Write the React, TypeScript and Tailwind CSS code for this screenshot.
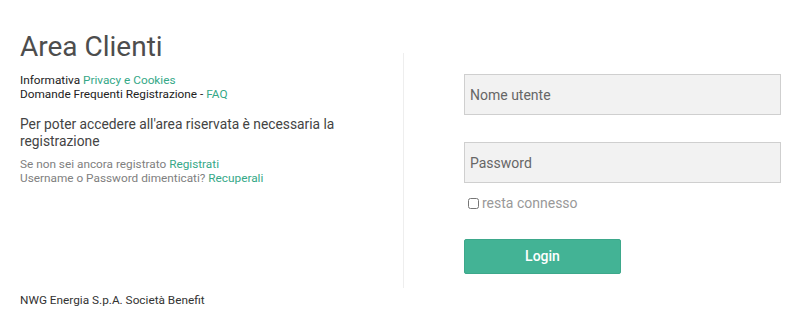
import React from 'react';

const App: React.FC = () => {
  return (
    <div className="w-[800px] h-[317px] bg-white text-[#333] font-['Roboto',sans-serif] flex flex-col">
      <div className="flex">
        {/* left column */}
        <div className="w-[403px] pl-5 pt-[32px]">
          <h1 className="text-[28px] leading-[30px] text-[#4d4d4d] font-normal">Area Clienti</h1>
          <div className="mt-[11px] text-[11.8px] leading-[14px] text-[#222]">
            <div>
              Informativa <a className="text-[#35a887]">Privacy e Cookies</a>
            </div>
            <div>
              Domande Frequenti Registrazione - <a className="text-[#35a887]">FAQ</a>
            </div>
          </div>
          <p className="mt-[15px] text-[13.8px] leading-[17px] text-[#444] w-[330px]">
            Per poter accedere all'area riservata è necessaria la registrazione
          </p>
          <div className="mt-[7px] text-[11.8px] leading-[14px] text-[#808080]">
            <div>
              Se non sei ancora registrato <a className="text-[#35a887]">Registrati</a>
            </div>
            <div>
              Username o Password dimenticati? <a className="text-[#35a887]">Recuperali</a>
            </div>
          </div>
        </div>

        {/* right column */}
        <div className="mt-[53px] h-[235px] border-l border-[#eee] pl-[60px] pr-[19px] flex-1">
          <div className="pt-[21px] flex flex-col">
            <input
              type="text"
              placeholder="Nome utente"
              className="h-[41px] w-[317px] bg-[#f2f2f2] border border-[#cfcfcf] px-[5px] text-[14px] placeholder:text-[#666] outline-none"
            />
            <input
              type="password"
              placeholder="Password"
              className="mt-[27px] h-[41px] w-[317px] bg-[#f2f2f2] border border-[#cfcfcf] px-[5px] text-[14px] placeholder:text-[#666] outline-none"
            />
            <label className="mt-[12px] ml-[4px] flex items-center gap-[3px] text-[14px] leading-[16px] text-[#999]">
              <input type="checkbox" className="w-[11px] h-[11px] m-0 accent-[#666]" />
              <span>resta connesso</span>
            </label>
            <button className="mt-[28px] h-[35px] w-[157px] bg-[#43b395] border border-[#3da88b] rounded-[2px] text-white text-[14px] font-medium">
              Login
            </button>
          </div>
        </div>
      </div>
      <div className="pl-5 mt-[5px] text-[11.8px] leading-[14px] text-[#333]">NWG Energia S.p.A. Società Benefit</div>
    </div>
  );
};

export default App;
